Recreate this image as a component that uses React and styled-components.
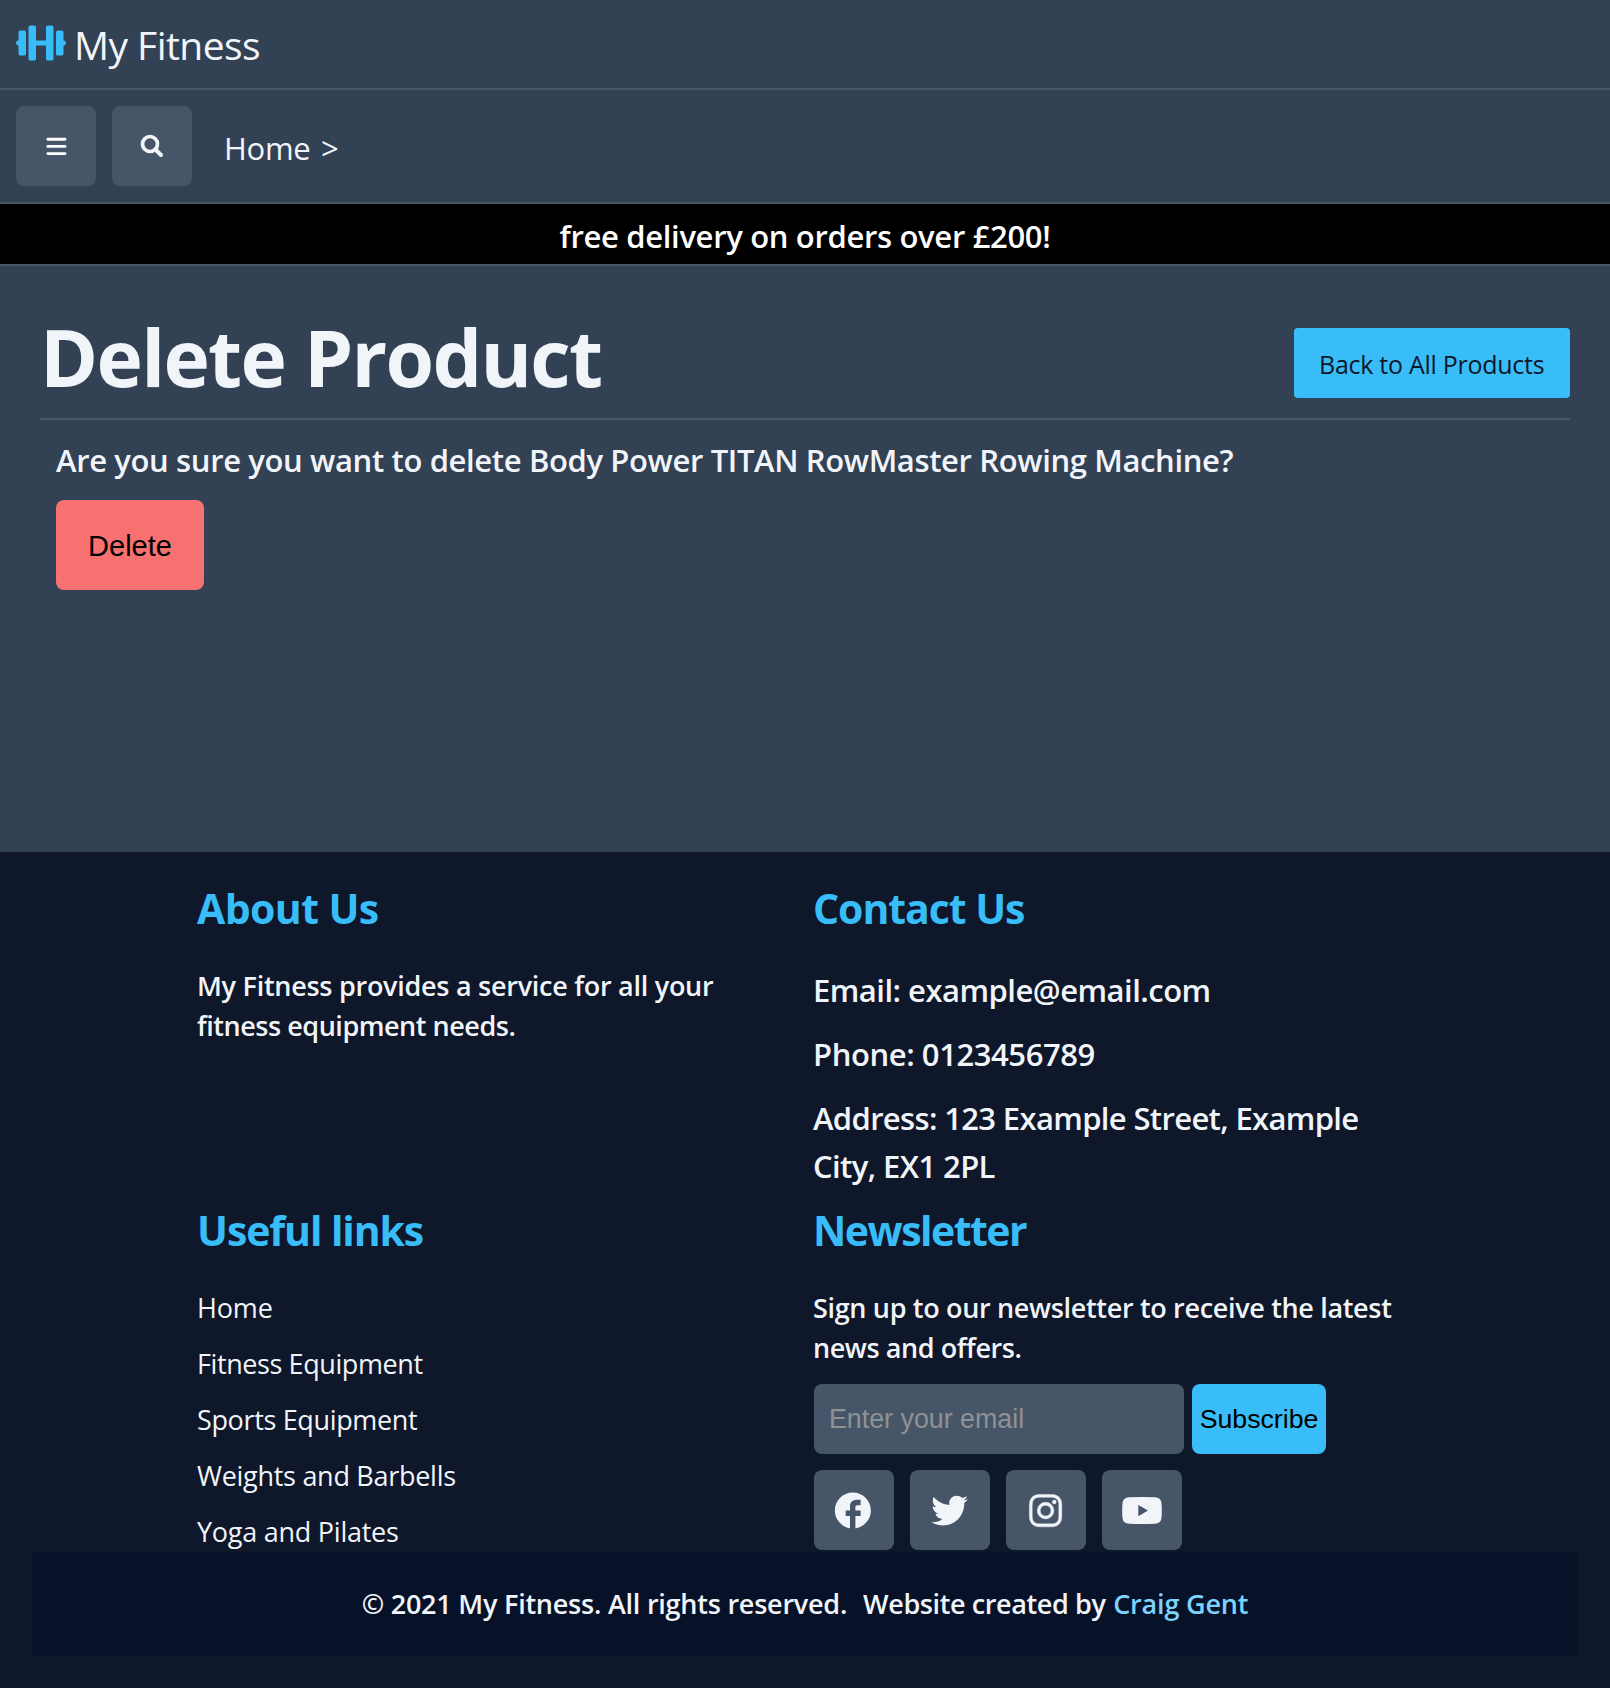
import React from 'react';
import styled, { createGlobalStyle } from 'styled-components';
import { FaBars } from 'react-icons/fa6';
import { BiLogoInstagram } from 'react-icons/bi';
import { RiTwitterFill } from 'react-icons/ri';

const GlobalStyle = createGlobalStyle`
  *, *::before, *::after { box-sizing: border-box; }
  body {
    margin: 0;
    background: #334155;
    color: #f1f5f9;
    font-family: "Open Sans", "Noto Sans", sans-serif;
  }
  h1, h2, h3, p, ul { margin: 0; padding: 0; }
  a { color: inherit; text-decoration: none; }
`;

const Page = styled.div`
  display: flex;
  flex-direction: column;
  min-height: 1688px;
`;

const Header = styled.header`
  display: flex;
  height: 90px;
  padding: 16px 16px 0;
  border-bottom: 2px solid #4b5563;
`;

const Brand = styled.a`
  display: flex;
  gap: 8px;
  font-size: 39px;
  line-height: 56px;
  letter-spacing: -0.55px;
  padding-top: 1px;
`;

const BrandIcon = styled.svg`
  width: 50px;
  height: 40px;
  margin-top: 6px;
  fill: #38bdf8;
`;

const Nav = styled.nav`
  display: flex;
  align-items: center;
  gap: 16px;
  height: 114px;
  padding: 0 16px;
  border-bottom: 2px solid #4b5563;
`;

const IconButton = styled.button`
  display: flex;
  align-items: center;
  justify-content: center;
  width: 80px;
  height: 80px;
  padding: ${(p) => p.$drop || 0}px 0 0;
  border: 0;
  border-radius: 8px;
  background: #475569;
  color: ${(p) => p.$color || '#f1f5f9'};
`;

const Breadcrumb = styled.div`
  padding: 4px 0 0 16px;
  font-size: 31px;
  line-height: 48px;
  letter-spacing: -0.3px;
  word-spacing: 2.9px;
`;

const Banner = styled.div`
  height: 62px;
  padding-top: 8px;
  background: #000;
  border-bottom: 2px solid #4b5563;
  color: #fff;
  font-size: 31px;
  font-weight: 600;
  line-height: 48px;
  letter-spacing: -0.33px;
  text-align: center;
`;

const Main = styled.main`
  height: 586px;
  padding: 30px 40px 0;
`;

const TitleRow = styled.div`
  display: flex;
  justify-content: space-between;
  align-items: flex-start;
  height: 124px;
  border-bottom: 2px solid #4b5563;
`;

const Title = styled.h1`
  padding-top: 1px;
  font-size: 78.5px;
  font-weight: 700;
  line-height: 119px;
  letter-spacing: -1.68px;
`;

const BackLink = styled.a`
  width: 276px;
  height: 70px;
  margin-top: 32px;
  padding: 2px 0 0 25px;
  border-radius: 4px;
  background: #38bdf8;
  color: #0f172a;
  font-size: 25px;
  line-height: 68px;
  letter-spacing: -0.27px;
  white-space: nowrap;
`;

const Confirm = styled.form`
  display: flex;
  flex-direction: column;
  align-items: flex-start;
  gap: 16px;
  padding: 16px;
`;

const Question = styled.p`
  font-size: 31px;
  font-weight: 600;
  line-height: 48px;
  letter-spacing: -0.37px;
  white-space: nowrap;
`;

const DeleteButton = styled.button`
  width: 148px;
  height: 90px;
  padding: 2px 0 0;
  border: 0;
  border-radius: 8px;
  background: #f87171;
  color: #000;
  font: 29px "Liberation Sans", Arial, sans-serif;
`;

const Footer = styled.footer`
  flex: 1;
  padding: 28px 32px 0;
  background: #0f172a;
`;

const Columns = styled.div`
  display: grid;
  grid-template-columns: 616px 616px;
  grid-template-rows: 322px 350px;
  padding-left: 165px;
`;

const Heading = styled.h2`
  margin-bottom: 30px;
  color: #38bdf8;
  font-size: 41px;
  font-weight: 700;
  line-height: 56px;
  letter-spacing: ${(p) => p.$track}px;
`;

const Line = styled.span`
  display: block;
  letter-spacing: ${(p) => p.$track}px;
  white-space: nowrap;
`;

const Text = styled.p`
  font-size: 27px;
  font-weight: 600;
  line-height: 40px;
`;

const Contact = styled.p`
  margin-bottom: 16px;
  font-size: 31px;
  font-weight: 600;
  line-height: 48px;
`;

const Links = styled.ul`
  display: flex;
  flex-direction: column;
  gap: 16px;
  list-style: none;
  font-size: 27px;
  line-height: 40px;
`;

const Subscribe = styled.form`
  display: flex;
  gap: 8px;
  margin: 16px 0 16px 1px;
`;

const EmailInput = styled.input`
  width: 370px;
  height: 70px;
  padding: 0 15px;
  border: 0;
  border-radius: 8px;
  background: #475569;
  color: #f1f5f9;
  font: 26.8px "Liberation Sans", Arial, sans-serif;
  &::placeholder { color: #8f9295; opacity: 1; }
`;

const SubscribeButton = styled.button`
  width: 134px;
  height: 70px;
  padding: 0;
  border: 0;
  border-radius: 8px;
  background: #38bdf8;
  color: #000;
  font: 26.7px "Liberation Sans", Arial, sans-serif;
`;

const Socials = styled.div`
  display: flex;
  gap: 16px;
  margin-left: 1px;
`;

const Copyright = styled.div`
  display: flex;
  justify-content: center;
  height: 104px;
  background: #071229;
  font-size: 27px;
  font-weight: 600;
  line-height: 103px;
`;

const Credit = styled.span`
  margin-left: 16px;
  letter-spacing: -0.39px;
`;

const Author = styled.a`
  margin-left: 7.7px;
  color: #7dd3fc;
  letter-spacing: -0.18px;
`;

const DumbbellIcon = () => (
  <BrandIcon viewBox="0 0 640 512">
    <path d="M104 96h-48C42.75 96 32 106.8 32 120V224C14.33 224 0 238.3 0 256c0 17.67 14.33 32 32 32v104C32 405.3 42.75 416 56 416h48C117.3 416 128 405.3 128 392v-272C128 106.8 117.3 96 104 96zM456 32h-48C394.8 32 384 42.75 384 56V224H256V56C256 42.75 245.3 32 232 32h-48C170.8 32 160 42.75 160 56v400C160 469.3 170.8 480 184 480h48C245.3 480 256 469.3 256 456V288h128v168c0 13.25 10.75 24 24 24h48c13.25 0 24-10.75 24-24V56C480 42.75 469.3 32 456 32zM608 224V120C608 106.8 597.3 96 584 96h-48C522.8 96 512 106.8 512 120v272c0 13.25 10.75 24 24 24h48c13.25 0 24-10.75 24-24V288c17.67 0 32-14.33 32-32C640 238.3 625.7 224 608 224z" />
  </BrandIcon>
);

const SearchIcon = () => (
  <svg width="24" height="24" viewBox="0 0 24 24" fill="none" stroke="currentColor" strokeWidth="3.7">
    <circle cx="10" cy="10" r="7.5" />
    <path d="M15.5 15.5L21 21" strokeWidth="4" strokeLinecap="round" />
  </svg>
);

const FacebookIcon = () => (
  <svg width="43.2" height="43.2" viewBox="0.4 0 24 24" fill="currentColor">
    <path d="M22 12c0-5.52-4.48-10-10-10S2 6.48 2 12c0 4.94 3.6 9.04 8.4 9.87V15H8v-3h2.4V9.5C10.4 7.57 11.97 6 13.9 6H16.3v3h-1.9c-.55 0-1 .45-1 1v2h2.9v3h-2.9v6.9C18.3 21.2 22 17.05 22 12z" />
  </svg>
);

const YoutubeIcon = () => (
  <svg width="40" height="27" viewBox="0 0 40 27" fill="currentColor">
    <path
      fillRule="evenodd"
      d="M7 .2Q20-.2 33 .2Q38.6 .5 39.4 5.5Q40.3 13.5 39.4 21.5Q38.6 26.5 33 26.8Q20 27.2 7 26.8Q1.4 26.5 .6 21.5Q-.3 13.5 .6 5.5Q1.4 .5 7 .2ZM16.3 8V19.2L26 13.6Z"
    />
  </svg>
);

const links = [
  ['Home', -0.15],
  ['Fitness Equipment', -0.41],
  ['Sports Equipment', -0.35],
  ['Weights and Barbells', -0.28],
  ['Yoga and Pilates', -0.25],
];

export default function App() {
  return (
    <Page>
      <GlobalStyle />
      <Header>
        <Brand href="#">
          <DumbbellIcon />
          My Fitness
        </Brand>
      </Header>
      <Nav>
        <IconButton $color="#fff" aria-label="Menu"><FaBars size={22.86} /></IconButton>
        <IconButton aria-label="Search"><SearchIcon /></IconButton>
        <Breadcrumb><a href="#">Home</a> &gt;</Breadcrumb>
      </Nav>
      <Banner>free delivery on orders over £200!</Banner>
      <Main>
        <TitleRow>
          <Title>Delete Product</Title>
          <BackLink href="#">Back to All Products</BackLink>
        </TitleRow>
        <Confirm>
          <Question>Are you sure you want to delete Body Power TITAN RowMaster Rowing Machine?</Question>
          <DeleteButton type="button">Delete</DeleteButton>
        </Confirm>
      </Main>
      <Footer>
        <Columns>
          <section>
            <Heading $track={-0.6}>About Us</Heading>
            <Text>
              <Line $track={-0.27}>My Fitness provides a service for all your</Line>
              <Line $track={-0.47}>fitness equipment needs.</Line>
            </Text>
          </section>
          <section>
            <Heading $track={-1.05}>Contact Us</Heading>
            <Contact><Line $track={-0.51}>Email: example@email.com</Line></Contact>
            <Contact><Line $track={-0.42}>Phone: 0123456789</Line></Contact>
            <Contact>
              <Line $track={-0.65}>Address: 123 Example Street, Example</Line>
              <Line $track={-0.6}>City, EX1 2PL</Line>
            </Contact>
          </section>
          <section>
            <Heading $track={-1.1}>Useful links</Heading>
            <Links>
              {links.map(([label, track]) => (
                <li key={label}><a href="#"><Line $track={track}>{label}</Line></a></li>
              ))}
            </Links>
          </section>
          <section>
            <Heading $track={-1.5}>Newsletter</Heading>
            <Text>
              <Line $track={-0.33}>Sign up to our newsletter to receive the latest</Line>
              <Line $track={-0.43}>news and offers.</Line>
            </Text>
            <Subscribe>
              <EmailInput type="email" placeholder="Enter your email" />
              <SubscribeButton type="button">Subscribe</SubscribeButton>
            </Subscribe>
            <Socials>
              <IconButton $drop={1} aria-label="Facebook"><FacebookIcon /></IconButton>
              <IconButton $drop={1} aria-label="Twitter"><RiTwitterFill size={43.2} /></IconButton>
              <IconButton $drop={1} aria-label="Instagram"><BiLogoInstagram size={43.2} stroke="currentColor" strokeWidth={0.25} /></IconButton>
              <IconButton $drop={1} aria-label="YouTube"><YoutubeIcon /></IconButton>
            </Socials>
          </section>
        </Columns>
        <Copyright>
          <Line as="span" $track={-0.23}>© 2021 My Fitness. All rights reserved.</Line>
          <Credit>Website created by</Credit>
          <Author href="#">Craig Gent</Author>
        </Copyright>
      </Footer>
    </Page>
  );
}
